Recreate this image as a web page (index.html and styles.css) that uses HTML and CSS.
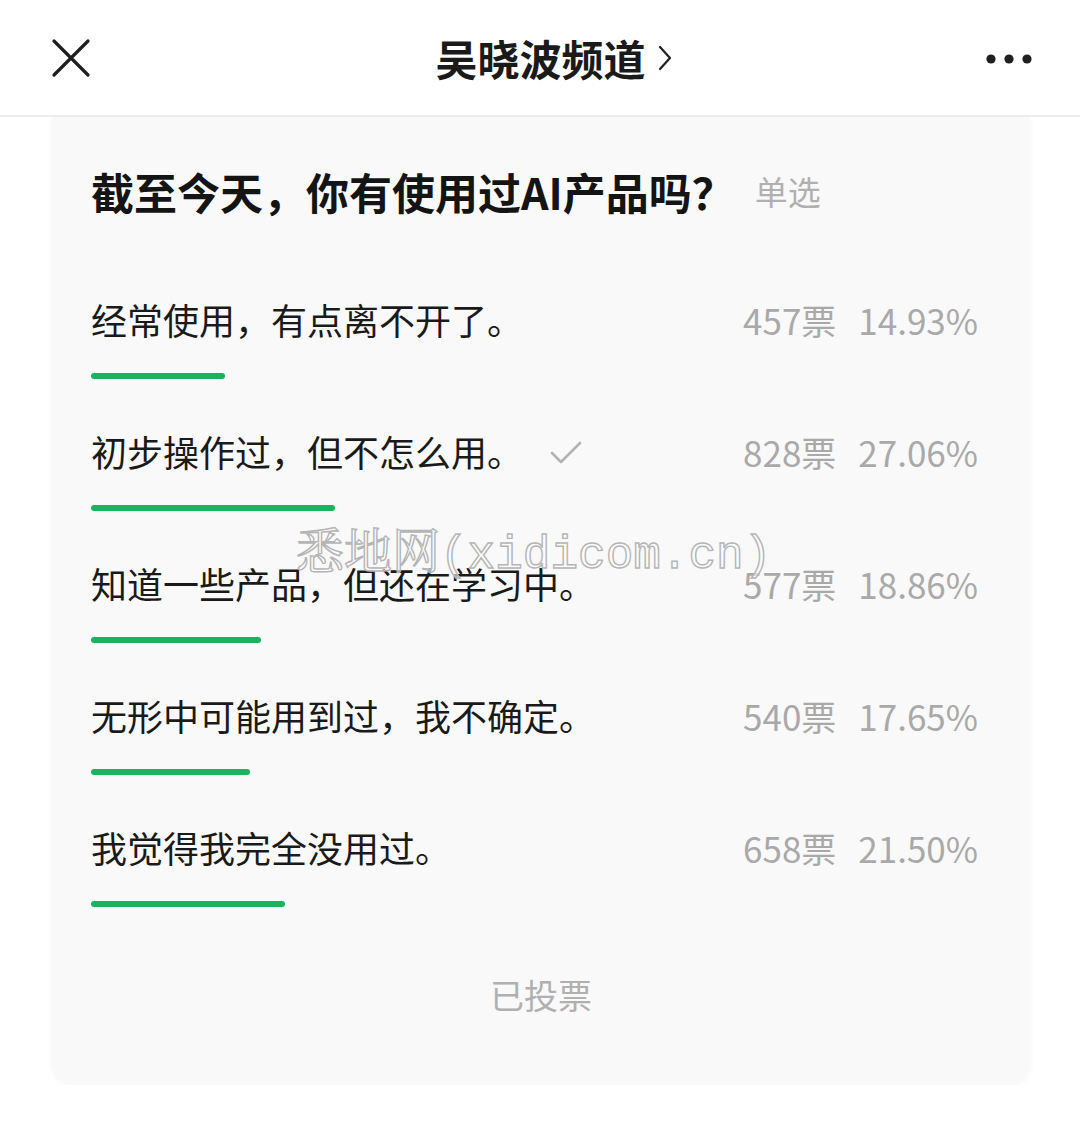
FILE: index.html
```html
<!DOCTYPE html>
<html lang="zh-CN">
<head>
  <meta charset="UTF-8" />
  <meta name="viewport" content="width=device-width, initial-scale=1.0"/>
  <title>吴晓波频道</title>
  <link rel="stylesheet" href="styles.css">
</head>
<body>
  <div class="topbar">
    <svg class="close" width="40" height="40" viewBox="0 0 40 40">
      <path d="M3 3 L37 37 M37 3 L3 37" stroke="#1f1f1f" stroke-width="3.2" fill="none" stroke-linecap="round"/>
    </svg>
    <div class="channel">
      <span>吴晓波频道</span>
      <svg width="18" height="30" viewBox="0 0 18 30">
        <path d="M4 4 L14 15 L4 26" stroke="#1f1f1f" stroke-width="2.2" fill="none" stroke-linecap="round" stroke-linejoin="round"/>
      </svg>
    </div>
    <svg class="more" width="46" height="12" viewBox="0 0 46 12">
      <circle cx="5" cy="6" r="4.6" fill="#1f1f1f"/>
      <circle cx="23" cy="6" r="4.6" fill="#1f1f1f"/>
      <circle cx="41" cy="6" r="4.6" fill="#1f1f1f"/>
    </svg>
  </div>

  <div class="card">
    <div class="question">
      <span class="q-text">截至今天，你有使用过AI产品吗？</span>
      <span class="q-type">单选</span>
    </div>

    <div class="option">
      <div class="opt-row">
        <span class="opt-text">经常使用，有点离不开了。</span>
        <span class="stats"><span>457票</span><span>14.93%</span></span>
      </div>
      <div class="bar" style="width: 134px"></div>
    </div>

    <div class="option">
      <div class="opt-row">
        <span class="opt-text">初步操作过，但不怎么用。
          <svg class="check" width="34" height="26" viewBox="0 0 34 26">
            <path d="M3 13 L12 22 L31 3" stroke="#b3b3b3" stroke-width="2.6" fill="none" stroke-linecap="round" stroke-linejoin="round"/>
          </svg>
        </span>
        <span class="stats"><span>828票</span><span>27.06%</span></span>
      </div>
      <div class="bar" style="width: 244px"></div>
    </div>

    <div class="option">
      <div class="opt-row">
        <span class="opt-text">知道一些产品，但还在学习中。</span>
        <span class="stats"><span>577票</span><span>18.86%</span></span>
      </div>
      <div class="bar" style="width: 170px"></div>
    </div>

    <div class="option">
      <div class="opt-row">
        <span class="opt-text">无形中可能用到过，我不确定。</span>
        <span class="stats"><span>540票</span><span>17.65%</span></span>
      </div>
      <div class="bar" style="width: 159px"></div>
    </div>

    <div class="option">
      <div class="opt-row">
        <span class="opt-text">我觉得我完全没用过。</span>
        <span class="stats"><span>658票</span><span>21.50%</span></span>
      </div>
      <div class="bar" style="width: 194px"></div>
    </div>

    <div class="voted">已投票</div>

    <div class="watermark">悉地网<span class="wm-latin">(xidicom.cn)</span></div>
  </div>
</body>
</html>
```

FILE: styles.css
```css
body {
  margin: 0;
  background: #fff;
  font-family: "Noto Sans CJK SC", "Noto Sans", sans-serif;
  color: #1a1a1a;
}

.topbar {
  height: 115px;
  display: flex;
  align-items: center;
  justify-content: space-between;
  padding: 0 48px 0 51px;
  border-bottom: 2px solid #ededed;
  box-sizing: content-box;
}

.channel {
  display: flex;
  align-items: center;
  gap: 10px;
  font-size: 42px;
  font-weight: 700;
  margin-left: 32px;
}

.more {
  margin-top: 2px;
}

.card {
  position: relative;
  margin: 0 50px 0 52px;
  background: #f9f9f9;
  border-radius: 0 0 22px 22px;
  box-shadow: 0 2px 6px rgba(0, 0, 0, 0.04);
  padding: 46px 52px 66px 39px;
}

.question {
  display: flex;
  align-items: center;
  height: 56px;
  margin-bottom: 76px;
}

.q-text {
  font-size: 43px;
  font-weight: 700;
  color: #141414;
}

.q-type {
  font-size: 33px;
  color: #b0b0b0;
  margin-left: 20px;
}

.option {
  margin-bottom: 48px;
}

.opt-row {
  display: flex;
  justify-content: space-between;
  align-items: center;
  height: 48px;
  margin-bottom: 30px;
}

.opt-text {
  font-size: 36px;
  display: flex;
  align-items: center;
}

.check {
  margin-left: 26px;
  margin-top: 4px;
}

.stats {
  display: flex;
  gap: 22px;
  font-size: 35px;
  color: #a9a9a9;
}

.bar {
  height: 6px;
  border-radius: 3px;
  background: #1ab35f;
}

.voted {
  text-align: center;
  font-size: 34px;
  color: #b0b0b0;
  height: 48px;
  line-height: 48px;
  margin-top: 64px;
  padding-left: 13px;
}

.watermark {
  position: absolute;
  left: 244px;
  top: 396px;
  font-family: "Noto Serif CJK SC", "Liberation Serif", serif;
  font-size: 48px;
  color: rgba(255, 255, 255, 0.6);
  -webkit-text-stroke: 1.4px #b5b5b5;
}

.wm-latin {
  font-family: "Liberation Mono", monospace;
  font-size: 46px;
}
```
